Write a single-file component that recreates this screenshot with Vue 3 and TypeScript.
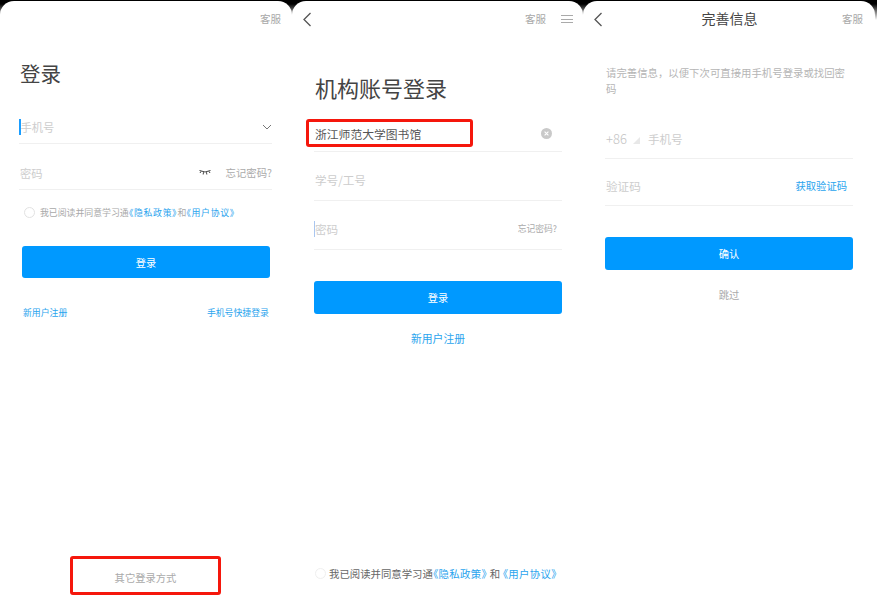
<script setup lang="ts">
const title2 = '机构账号登录'
</script>

<template>
  <div class="board">
    <!-- Phone 1 -->
    <section class="phone p1">
      <header class="bar">
        <span class="bar-side"></span>
        <span class="svc">客服</span>
      </header>
      <h1 class="t1">登录</h1>
      <div class="fields f1">
        <div class="row">
          <i class="caret"></i>
          <span class="ph">手机号</span>
          <svg class="chev" width="10" height="6" viewBox="0 0 10 6"><path d="M1 1l4 4 4-4" fill="none" stroke="#777" stroke-width="1"/></svg>
        </div>
        <div class="row">
          <span class="ph">密码</span>
          <svg class="eye" width="12" height="7" viewBox="0 0 12 7"><path d="M.5 1.5Q6 4.5 11.5 1.5M2 2.4L1 4M4.5 3.2L4.2 5.5M7.5 3.2L7.8 5.5M10 2.4L11 4" fill="none" stroke="#444" stroke-width="1"/></svg>
          <span class="forgot">忘记密码?</span>
        </div>
      </div>
      <div class="agree a1">
        <i class="radio"></i>
        <span class="agree-text">我已阅读并同意学习通<a>《隐私政策》</a>和<a>《用户协议》</a></span>
      </div>
      <button class="btn b1">登录</button>
      <div class="links">
        <a>新用户注册</a>
        <a>手机号快捷登录</a>
      </div>
      <div class="other">其它登录方式</div>
    </section>

    <!-- Phone 2 -->
    <section class="phone p2">
      <header class="bar">
        <svg class="back" width="10" height="15" viewBox="0 0 10 15"><path d="M8.5 1L2 7.5 8.5 14" fill="none" stroke="#555" stroke-width="1.3"/></svg>
        <span class="bar-gap"></span>
        <span class="svc">客服</span>
        <span class="menu"><i></i><i></i><i></i></span>
      </header>
      <h1 class="t2">{{ title2 }}</h1>
      <div class="fields f2">
        <div class="row first">
          <span class="val">浙江师范大学图书馆</span>
          <svg class="clear" width="11" height="11" viewBox="0 0 11 11"><circle cx="5.5" cy="5.5" r="5.5" fill="#c9c9c9"/><path d="M3.6 3.6l3.8 3.8M7.4 3.6l-3.8 3.8" stroke="#fff" stroke-width="1.1"/></svg>
          <i class="mark"></i>
        </div>
        <div class="row"><span class="ph big">学号/工号</span></div>
        <div class="row">
          <i class="caret soft"></i>
          <span class="ph big">密码</span>
          <span class="forgot small">忘记密码?</span>
        </div>
      </div>
      <button class="btn b2">登录</button>
      <a class="reg">新用户注册</a>
      <div class="agree a2">
        <i class="radio soft"></i>
        <span class="agree-text dark">我已阅读并同意学习通<a>《隐私政策》</a><span class="and">和</span><a>《用户协议》</a></span>
      </div>
    </section>

    <!-- Phone 3 -->
    <section class="phone p3">
      <header class="bar">
        <svg class="back" width="10" height="15" viewBox="0 0 10 15"><path d="M8.5 1L2 7.5 8.5 14" fill="none" stroke="#555" stroke-width="1.3"/></svg>
        <span class="t3">完善信息</span>
        <span class="svc">客服</span>
      </header>
      <p class="desc">请完善信息，以便下次可直接用手机号登录或找回密码</p>
      <div class="fields f3">
        <div class="row">
          <span class="code">+86</span>
          <i class="tri"></i>
          <span class="ph mid">手机号</span>
        </div>
        <div class="row">
          <span class="ph mid">验证码</span>
          <a class="get">获取验证码</a>
        </div>
      </div>
      <button class="btn b3">确认</button>
      <div class="skip">跳过</div>
    </section>
  </div>
</template>

<style>
html, body { margin: 0; background: #fff; }
</style>

<style scoped>
.board {
  width: 877px;
  height: 600px;
  box-sizing: border-box;
  padding: 1px 2px 0 0;
  display: grid;
  grid-template-columns: 292px 291px 292px;
  overflow: hidden;
  background: linear-gradient(#000 0, #000 4px, #fff 20px);
  font-family: "Noto Sans CJK SC", "Noto Sans", sans-serif;
  color: #444;
}
.phone {
  display: flex;
  flex-direction: column;
  background: #fff;
  border-radius: 14px 14px 0 0;
  min-width: 0;
}
.bar {
  height: 36px;
  display: flex;
  align-items: center;
  flex: none;
}
.bar-side, .bar-gap { flex: 1; }
.svc { font-size: 10.5px; color: #a8a8a8; padding-bottom: 2px; }
.p1 .svc { margin-right: 11px; }
.back { margin-left: 10px; }
.p2 .menu {
  margin: 0 10px 0 15px;
  width: 12px;
  display: flex;
  flex-direction: column;
  gap: 2.5px;
}
.menu i { display: block; height: 1px; background: #aaa; }
h1 { margin: 0; font-weight: 400; color: #444; }
.t1 { font-size: 20.5px; line-height: 30px; margin: 21px 0 0 20px; }
.t2 { font-size: 22px; line-height: 32px; margin: 34px 0 0 23px; }
.t3 {
  flex: 1;
  text-align: center;
  font-size: 14px;
  color: #444;
  padding: 0 0 2px 14px;
}
.p3 .svc { margin-right: 12px; }
.fields { display: flex; flex-direction: column; }
.row {
  display: flex;
  align-items: center;
  position: relative;
  box-sizing: border-box;
  border-bottom: 1px solid #f0f0f0;
}
.f1 { margin: 10px 20px 0 19px; }
.f1 .row { height: 46px; padding-top: 12px; }
.f2 { margin: 0 21px 0 22px; }
.f2 .row { height: 49px; padding-top: 7px; }
.f2 .row.first { padding-top: 13px; }
.f3 { margin: 15px 22px 0 22px; }
.f3 .row { height: 47px; padding-top: 7px; }
.ph { font-size: 11.3px; color: #cdcdcd; padding-left: 1px; }
.ph.big { font-size: 11.6px; }
.ph.mid { font-size: 11.6px; }
.val { font-size: 11.8px; color: #555; flex: 1; padding-left: 1px; }
.caret {
  width: 1.5px;
  height: 16px;
  background: #1a9dff;
  flex: none;
  margin-right: -1px;
}
.caret.soft { width: 1px; background: #a9c6f0; }
.chev { margin-left: auto; margin-right: 0; }
.eye { margin-left: auto; margin-right: 15px; }
.forgot { font-size: 10.4px; color: #aaa; }
.forgot.small { margin-left: auto; margin-right: 5px; font-size: 8.8px; }
.clear { margin-right: 10px; }
.mark {
  position: absolute;
  left: -8px;
  top: 16px;
  width: 167px;
  height: 28px;
  box-sizing: border-box;
  border: 3px solid #f5170c;
  border-radius: 3px;
}
.agree { display: flex; align-items: center; }
.radio {
  width: 11px;
  height: 11px;
  box-sizing: border-box;
  border: 1px solid #e2e2e2;
  border-radius: 50%;
  flex: none;
}
.radio.soft { border-color: #efefef; }
.agree-text { font-feature-settings: "palt"; white-space: nowrap; }
.agree-text a { color: #2aa4ee; }
.a1 { margin: 16px 0 0 24px; gap: 5px; height: 12px; }
.a1 .agree-text { font-size: 8.9px; color: #a9a9a9; }
.a1 .agree-text a { letter-spacing: 0.72px; }
.a2 { margin: auto 0 20px 23px; gap: 3px; height: 14px; }
.a2 .agree-text { font-size: 10.4px; color: #666; }
.a2 .agree-text a { letter-spacing: 0.4px; }
.and { margin: 0 2.5px; }
.btn {
  display: block;
  border: 0;
  padding: 0;
  background: #0099ff;
  color: #fff;
  font-family: inherit;
  font-size: 10.2px;
  border-radius: 3px;
  flex: none;
}
.b1 { width: 248px; height: 32px; margin: 28px 0 0 22px; }
.b2 { width: 248px; height: 33px; margin: 31px 0 0 22px; }
.b3 { width: 248px; height: 33px; margin: 31px 0 0 22px; }
.links {
  display: flex;
  justify-content: space-between;
  margin: 28px 23px 0 23px;
  font-size: 8.9px;
  color: #2aa4ee;
  line-height: 14px;
}
.other {
  margin: auto 0 5px 70px;
  width: 151px;
  height: 39px;
  box-sizing: border-box;
  border: 3px solid #f5170c;
  border-radius: 3px;
  padding-top: 11px;
  line-height: 16px;
  text-align: center;
  font-size: 10.3px;
  color: #aaa;
}
.reg {
  align-self: center;
  margin: 16px 0 0 1px;
  font-size: 10.8px;
  line-height: 16px;
  color: #2aa4ee;
}
.desc {
  margin: 28px 22px 0 23px;
  font-size: 10.4px;
  line-height: 16px;
  color: #b5b5b5;
}
.code { font-size: 13px; font-weight: 300; color: #c4c4c4; padding-left: 1px; }
.tri {
  width: 0;
  height: 0;
  margin: 3px 7px 0 6px;
  border-left: 7px solid transparent;
  border-bottom: 7px solid #e8e8e8;
}
.get { margin-left: auto; margin-right: 6px; font-size: 10.3px; color: #2aa4ee; }
.skip {
  align-self: center;
  margin: 17px 0 0 0;
  font-size: 10.3px;
  line-height: 16px;
  color: #aaa;
}
</style>
